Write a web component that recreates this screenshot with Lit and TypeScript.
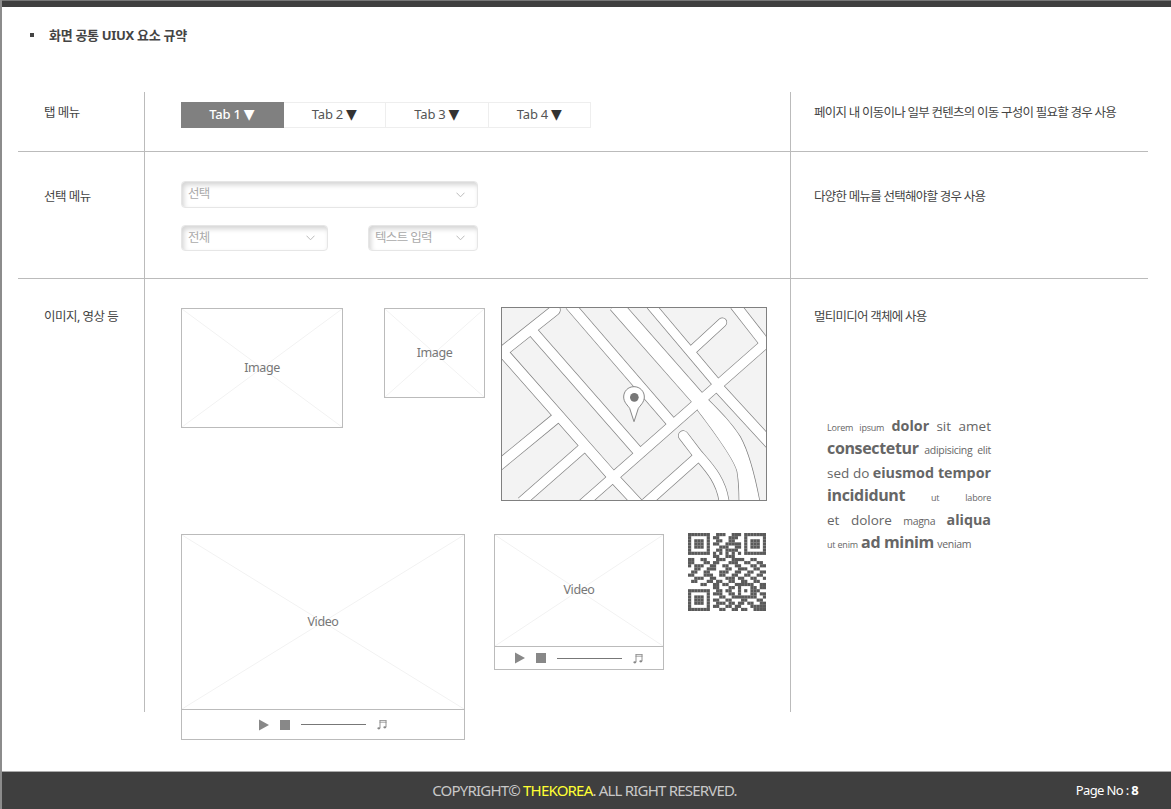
import { LitElement, html, css, svg } from "lit";
import { customElement, property } from "lit/decorators.js";

const QR_ROWS = [
  "1111111001110011101111111",
  "1000001011000111001000001",
  "1011101001100110001011101",
  "1011101011001111101011101",
  "1011101000111001101011101",
  "1000001001101111001000001",
  "1111111010101010101111111",
  "0000000011001110000000000",
  "1100110001110011110011000",
  "1100011011000111001100110",
  "1011100110011001100011011",
  "0011001110001100111001100",
  "0110011000111001100110011",
  "1100011100110011001100110",
  "0011100110001110110011001",
  "0110001101100110011001100",
  "0000110011011001111110011",
  "0000000011000110000011011",
  "1111111001101100110011100",
  "1000001011100110100011011",
  "1011101000110011111111001",
  "1011101011001100011000110",
  "1011101001110110110110011",
  "1000001011001101100011111",
  "1111111000110011011001111",
];

const qrCell = (r: number, c: number): boolean => {
  const ring = (n: number) => Math.max(Math.abs(r - 18), Math.abs(c - 18)) === n;
  return (QR_ROWS[r][c] === "1" && !ring(1)) || ring(0) || ring(2);
};

const ROADS = [
  { d: "M25 153L180 30", w: 30, cap: "round" },
  { d: "M18 150L345 521L430 612", w: 30 },
  { d: "M105 85L440 467", w: 29 },
  { d: "M225 15L540 380", w: 29 },
  { d: "M362 15L620 308", w: 41 },
  { d: "M467 15L672 258", w: 26 },
  { d: "M590 152L682 67", w: 25, cap: "round" },
  { d: "M720 15L810 130", w: 30 },
  { d: "M260 615L820 122", w: 28 },
  { d: "M670 262L825 431", w: 30 },
  { d: "M565 407L607 462C640 500 680 540 688 610", w: 28, cap: "round" },
  { d: "M607 472L452 610", w: 28 },
  { d: "M10 497L195 345", w: 30 },
  { d: "M80 605L280 430", w: 28 },
];
const WIDE = "M625 292L607 329C650 385 720 480 727 515C733 550 733 580 733 612L795 612C780 530 760 455 735 410C710 370 680 340 640 300Z";

@customElement("wire-box")
class WireBox extends LitElement {
  @property() label = "";
  @property({ type: Boolean }) controls = false;
  static styles = css`
    :host { display: flex; flex-direction: column; box-sizing: border-box; border: 1px solid #bbb; background: #fff; }
    .stage { flex: 1; min-height: 0; display: grid; place-items: center; }
    .stage > * { grid-area: 1 / 1; }
    .cross { width: 100%; height: 100%; display: block; }
    .cross line { stroke: #f2f2f2; stroke-width: 1; vector-effect: non-scaling-stroke; }
    .label { font-size: 12.5px; color: #777; letter-spacing: -0.4px; padding-bottom: 1px; }
    .bar { flex: none; border-top: 1px solid #bbb; display: flex; align-items: center; justify-content: center; height: var(--bar-h, 29px); }
    .bar svg { display: block; }
    .rule { width: 65px; height: 1px; background: #777; margin: 0 11px; }
    .stop { width: 10px; height: 10px; background: #888; margin-left: 11px; }
  `;
  render() {
    return html`
      <div class="stage">
        <svg class="cross" viewBox="0 0 100 100" preserveAspectRatio="none">
          <line x1="0" y1="0" x2="100" y2="100"></line>
          <line x1="100" y1="0" x2="0" y2="100"></line>
        </svg>
        <span class="label">${this.label}</span>
      </div>
      ${this.controls ? html`
        <div class="bar">
          <svg width="10" height="12" viewBox="0 0 10 12"><path d="M0 0.5L10 6L0 11.5Z" fill="#888"></path></svg>
          <div class="stop"></div>
          <div class="rule"></div>
          <svg width="10" height="11" viewBox="0 0 10 11" fill="none" stroke="#888">
            <path d="M2.5 1.5H9.5M2.5 3.2H9.5" stroke-width="0.8"></path>
            <path d="M3 1.5V9M9 1.5V8" stroke-width="0.9"></path>
            <ellipse cx="1.8" cy="9.3" rx="1.5" ry="1.1" fill="#888" stroke="none"></ellipse>
            <ellipse cx="7.8" cy="8.3" rx="1.5" ry="1.1" fill="#888" stroke="none"></ellipse>
          </svg>
        </div>` : ""}
    `;
  }
}

@customElement("select-box")
class SelectBox extends LitElement {
  @property() label = "";
  static styles = css`
    :host {
      display: flex; align-items: center; justify-content: space-between; box-sizing: border-box;
      border: 1px solid #e6e6e6; border-radius: 4px; padding: 0 12px 1px 6px;
      box-shadow: inset 2px 3px 5px rgba(0, 0, 0, 0.17);
      color: #aaa; font-size: 12.5px; letter-spacing: -0.65px; background: #fff;
    }
    svg { display: block; margin-top: 1px; }
  `;
  render() {
    return html`<span>${this.label}</span>
      <svg width="9" height="6" viewBox="0 0 9 6" fill="none" stroke="#bbb" stroke-width="1"><path d="M0.5 0.7L4.5 4.8L8.5 0.7"></path></svg>`;
  }
}

@customElement("app-root")
class AppRoot extends LitElement {
  static styles = css`
    :host {
      display: flex; flex-direction: column; height: 809px; box-sizing: border-box;
      font-family: "Noto Sans", "Noto Sans CJK KR", sans-serif; color: #444; background: #fff;
      border-left: 2px solid #8c8c8c; overflow: hidden;
    }
    .topbar { height: 6px; background: #3f3f3f; border-top: 1px solid #777; flex: none; }
    .head { height: 85px; flex: none; box-sizing: border-box; padding: 18px 0 0 28px; display: flex; align-items: flex-start; font-size: 13px; font-weight: 700; letter-spacing: -0.3px; color: #444; line-height: 20px; }
    .head i { width: 4px; height: 4px; background: #444; margin: 8px 15px 0 0; flex: none; }
    .table { margin: 0 23px 0 16px; flex: 1; min-height: 0; }
    .row { display: grid; grid-template-columns: 127px 646px 1fr; grid-template-rows: minmax(0, 1fr); box-sizing: border-box; border-bottom: 1px solid #bbb; font-size: 12.5px; line-height: 18px; }
    .row:last-child { border-bottom: 0; }
    .r1 { height: 60px; } .r2 { height: 127px; } .r3 { height: 433px; }
    .cell { box-sizing: border-box; border-right: 1px solid #bbb; min-height: 0; }
    .name { padding-left: 26px; letter-spacing: -0.5px; }
    .main { padding-left: 36px; }
    .desc { border-right: 0; padding-left: 23px; letter-spacing: -0.75px; }
    .r1 .name, .r1 .desc { padding-top: 12px; }
    .r2 .name, .r2 .desc { padding-top: 36px; }
    .r3 .name, .r3 .desc { padding-top: 29px; }
    .r1 .main { padding-top: 10px; }
    .r2 .main { padding-top: 29px; }
    .r3 .main { padding-top: 28px; }
    .tabs { display: flex; width: 410px; height: 26px; }
    .tab { flex: 1; display: flex; align-items: center; justify-content: center; gap: 3px; box-sizing: border-box; border: 1px solid #eee; border-left: 0; padding-bottom: 2px; font-size: 13px; color: #555; letter-spacing: -0.2px; }
    .tab.on { background: #808080; color: #fff; border-color: #808080; font-weight: 500; }
    .tab b { font: 400 14px "DejaVu Sans", sans-serif; color: #333; line-height: 1; }
    .tab.on b { color: #fff; }
    .selects { display: flex; flex-direction: column; gap: 17px; width: 297px; }
    .selects select-box { height: 27px; }
    .sel-row { display: flex; justify-content: space-between; }
    .sel-row select-box { height: 26px; }
    .sel-a { width: 147px; } .sel-b { width: 110px; }
    .canvas-a { display: flex; align-items: flex-start; height: 194px; }
    .canvas-b { display: flex; align-items: flex-start; margin-top: 33px; }
    .img1 { width: 162px; height: 120px; margin-top: 1px; }
    .img2 { width: 101px; height: 90px; margin: 1px 0 0 41px; }
    .map { width: 266px; height: 194px; margin-left: 16px; display: block; box-sizing: border-box; border: 1px solid #808080; background: #f3f3f3; }
    .vid1 { width: 284px; height: 206px; }
    .vid2 { width: 170px; height: 136px; margin-left: 29px; --bar-h: 22px; }
    .qr { width: 78px; height: 78px; margin: -1px 0 0 24px; display: block; }
    .cloud { width: 164px; margin: 88px 0 0 13px; color: #666; line-height: 23.4px; letter-spacing: 0; font-family: "Open Sans", "Noto Sans", sans-serif; }
    .cloud div { text-align: justify; text-align-last: justify; white-space: nowrap; height: 23.4px; }
    .cloud div.last { text-align-last: left; }
    .s9 { font-size: 9px; letter-spacing: -0.2px; } .s10 { font-size: 10.5px; letter-spacing: -0.3px; }
    .s14 { font-size: 13.5px; } .b15 { font-size: 14.3px; font-weight: 700; } .b17 { font-size: 16px; font-weight: 700; letter-spacing: -0.35px; }
    .foot { flex: none; height: 38px; box-sizing: border-box; border-top: 1px solid #aaa; padding-bottom: 2px; background: #3f3f3f; display: grid; grid-template-columns: 1fr auto 1fr; align-items: center; color: #c8c8c8; font-size: 15px; letter-spacing: -0.8px; }
    .foot .copy { grid-column: 2; margin-right: 4px; }
    .foot em { font-style: normal; color: #ffff33; }
    .foot .page { justify-self: end; margin-right: 33px; color: #fff; font-size: 13px; letter-spacing: -0.65px; }
    .foot .page b { font-weight: 700; }
  `;

  renderMap() {
    return html`<svg class="map" viewBox="21 24 792 576" preserveAspectRatio="none">
      ${ROADS.map((r) => svg`<path d=${r.d} fill="none" stroke="#808080" stroke-width=${r.w + 4} stroke-linecap=${r.cap ?? "butt"}></path>`)}
      <path d=${WIDE} fill="#fff" stroke="#808080" stroke-width="4"></path>
      ${ROADS.map((r) => svg`<path d=${r.d} fill="none" stroke="#fff" stroke-width=${r.w} stroke-linecap=${r.cap ?? "butt"}></path>`)}
      <path d=${WIDE} fill="#fff"></path>
      <path d="M417 260C399 260 386 274 386 291C386 307 399 317 404 325L417 365L430 325C435 317 448 307 448 291C448 274 435 260 417 260Z" fill="#fff" stroke="#888" stroke-width="3"></path>
      <circle cx="418" cy="292" r="13" fill="#777"></circle>
    </svg>`;
  }

  renderQr() {
    const cells = [];
    for (let r = 0; r < 25; r++) for (let c = 0; c < 25; c++) {
      if (qrCell(r, c)) cells.push(svg`<rect x=${c} y=${r} width="1.02" height="1.02"></rect>`);
    }
    return html`<svg class="qr" viewBox="0 0 25 25" fill="#5a5a5a">${cells}</svg>`;
  }

  render() {
    return html`
      <div class="topbar"></div>
      <div class="head"><i></i>화면 공통 UIUX 요소 규약</div>
      <div class="table">
        <div class="row r1">
          <div class="cell name">탭 메뉴</div>
          <div class="cell main">
            <div class="tabs">
              ${[1, 2, 3, 4].map((n) => html`<div class="tab ${n === 1 ? "on" : ""}">Tab ${n}<b>▼</b></div>`)}
            </div>
          </div>
          <div class="cell desc">페이지 내 이동이나 일부 컨텐츠의 이동 구성이 필요할 경우 사용</div>
        </div>
        <div class="row r2">
          <div class="cell name">선택 메뉴</div>
          <div class="cell main">
            <div class="selects">
              <select-box label="선택"></select-box>
              <div class="sel-row">
                <select-box class="sel-a" label="전체"></select-box>
                <select-box class="sel-b" label="텍스트 입력"></select-box>
              </div>
            </div>
          </div>
          <div class="cell desc">다양한 메뉴를 선택해야할 경우 사용</div>
        </div>
        <div class="row r3">
          <div class="cell name">이미지, 영상 등</div>
          <div class="cell main">
            <div class="canvas-a">
              <wire-box class="img1" label="Image"></wire-box>
              <wire-box class="img2" label="Image"></wire-box>
              ${this.renderMap()}
            </div>
            <div class="canvas-b">
              <wire-box class="vid1" label="Video" controls></wire-box>
              <wire-box class="vid2" label="Video" controls></wire-box>
              ${this.renderQr()}
            </div>
          </div>
          <div class="cell desc">
            멀티미디어 객체에 사용
            <div class="cloud">
              <div><span class="s9">Lorem ipsum</span> <span class="b15">dolor</span> <span class="s14">sit amet</span></div>
              <div><span class="b17">consectetur</span> <span class="s10">adipisicing elit</span></div>
              <div><span class="s14">sed do</span> <span class="b15">eiusmod tempor</span></div>
              <div><span class="b17">incididunt</span> <span class="s9">ut</span> <span class="s9">labore</span></div>
              <div><span class="s14">et dolore</span> <span class="s10">magna</span> <span class="b15">aliqua</span></div>
              <div class="last"><span class="s9">ut enim</span> <span class="b17">ad minim</span> <span class="s10">veniam</span></div>
            </div>
          </div>
        </div>
      </div>
      <div class="foot">
        <div class="copy">COPYRIGHT© <em>THEKOREA</em>. ALL RIGHT RESERVED.</div>
        <div class="page">Page No : <b>8</b></div>
      </div>
    `;
  }
}
